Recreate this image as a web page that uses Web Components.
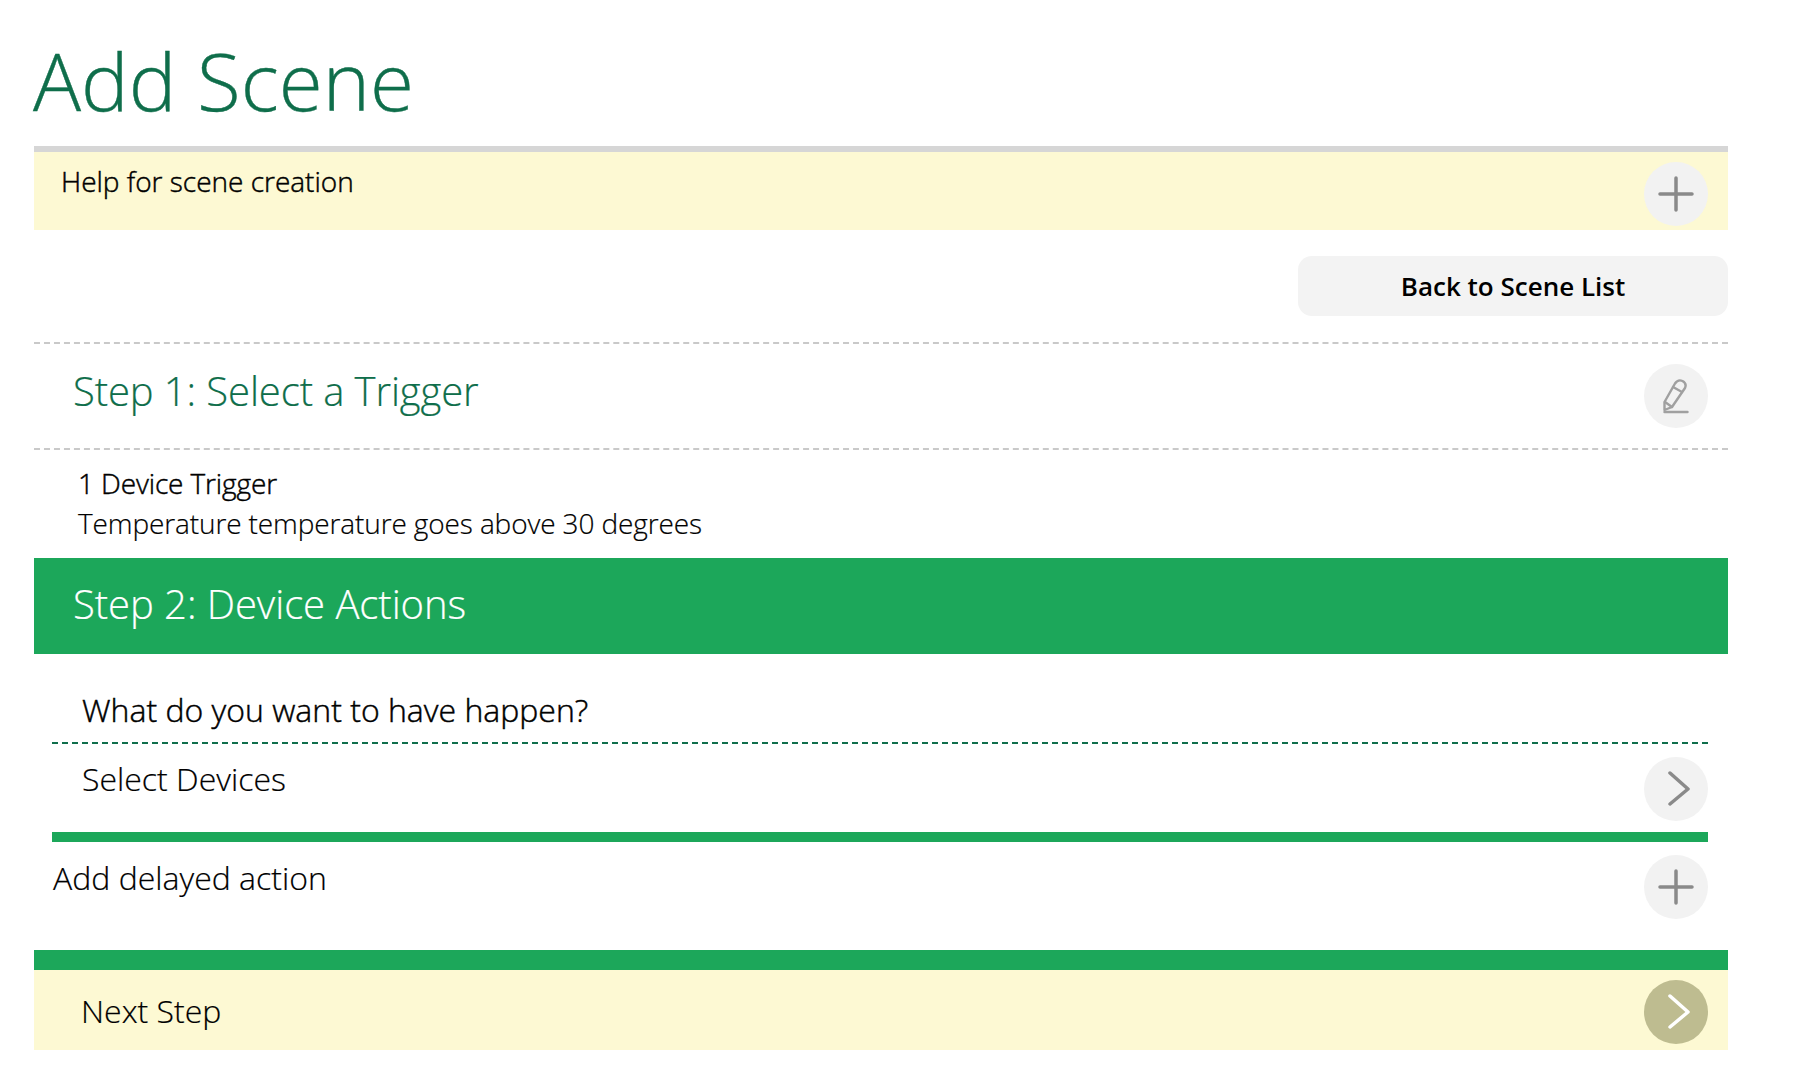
<!DOCTYPE html>
<html>
<head>
<meta charset="utf-8">
<title>Add Scene</title>
<style>
    html, body { margin: 0; background: #fff; }
    body { font-family: "Open Sans", sans-serif; font-weight: 300; color: #000; }
    scene-page { display: block; }
</style>
</head>
<body>
<template id="template-round-icon">
    <style>
        :host { display: block; flex: none; width: 64px; height: 64px; border-radius: 50%; background: var(--icon-bg, #f2f2f2); }
        svg { display: block; width: 64px; height: 64px; fill: none; stroke: var(--icon-fg, #8a8a8a); stroke-width: 3.5; stroke-linecap: round; stroke-linejoin: round; filter: blur(.5px); }
    </style>
    <svg viewBox="0 0 64 64"></svg>
</template>
<template id="template-scene-page">
    <style>
        :host { display: block; box-sizing: border-box; width: 1796px; padding: 0 68px 0 34px; }
        h1 { margin: 0 0 0 -1px; height: 146px; box-sizing: border-box; padding-top: 25px; font-size: 80px; line-height: 110px; font-weight: 300; color: #0f6e4b; -webkit-text-stroke: .4px #0f6e4b; }
        .back { display: flex; justify-content: flex-end; padding: 26px 0; }
        button { width: 430px; height: 60px; border: 0; border-radius: 14px; background: #f3f3f3; color: #000; font: 600 26px "Open Sans", sans-serif; padding: 0; }
    </style>
    <h1>Add Scene</h1>
    <help-bar>Help for scene creation</help-bar>
    <div class="back"><button>Back to Scene List</button></div>
    <step-title>Step 1: Select a Trigger</step-title>
    <trigger-summary heading="1 Device Trigger">Temperature temperature goes above 30 degrees</trigger-summary>
    <step-banner>Step 2: Device Actions</step-banner>
    <device-actions></device-actions>
    <next-step>Next Step</next-step>
</template>
<template id="template-help-bar">
    <style>
        :host { display: flex; justify-content: space-between; height: 84px; box-sizing: border-box; border-top: 6px solid #d6d6d6; background: #fdf9d3; font-size: 28px; padding: 10px 20px 0 27px; line-height: 38px; -webkit-text-stroke: .45px #000; }
    </style>
    <span><slot></slot></span>
    <round-icon name="plus"></round-icon>
</template>
<template id="template-step-title">
    <style>
        :host { display: flex; justify-content: space-between; height: 108px; box-sizing: border-box; border-top: 2px dashed #c9c9c9; border-bottom: 2px dashed #c9c9c9; padding: 20px 20px 0 39px; font-size: 40px; line-height: 50px; font-weight: 300; color: #0f6e4b; letter-spacing: -.1px; -webkit-text-stroke: .2px #0f6e4b; }
        span { padding-top: 2px; }
    </style>
    <span><slot></slot></span>
    <round-icon name="pencil"></round-icon>
</template>
<template id="template-trigger-summary">
    <style>
        :host { display: block; height: 108px; box-sizing: border-box; padding: 13px 0 0 44px; font-size: 28px; line-height: 40px; letter-spacing: -.12px; -webkit-text-stroke: .2px #000; }
        div { -webkit-text-stroke: .45px #000; }
    </style>
    <div></div>
    <slot></slot>
</template>
<template id="template-step-banner">
    <style>
        :host { display: block; height: 96px; box-sizing: border-box; background: #1ca75a; color: #fff; padding: 21px 0 0 39px; font-size: 40px; line-height: 50px; font-weight: 300; letter-spacing: -.05px; -webkit-text-stroke: .2px #fff; }
    </style>
    <slot></slot>
</template>
<template id="template-device-actions">
    <style>
        :host { display: block; box-sizing: border-box; height: 296px; padding: 0 20px 0 18px; font-size: 32px; -webkit-text-stroke: .2px #000; }
        .ask { height: 90px; box-sizing: border-box; padding: 34px 0 0 30px; line-height: 44px; border-bottom: 2px dashed #0f6e4b; -webkit-text-stroke: .45px #000; }
        .row { display: flex; justify-content: space-between; box-sizing: border-box; height: 98px; padding: 13px 0 0 30px; line-height: 44px; border-bottom: 10px solid #1ca75a; }
        .delay { display: flex; justify-content: space-between; padding: 13px 0 0 1px; line-height: 44px; }
        .delay span { padding-top: 1px; }
    </style>
    <div class="ask">What do you want to have happen?</div>
    <div class="row"><span>Select Devices</span><round-icon name="chevron"></round-icon></div>
    <div class="delay"><span>Add delayed action</span><round-icon name="plus"></round-icon></div>
</template>
<template id="template-next-step">
    <style>
        :host { display: flex; justify-content: space-between; height: 100px; box-sizing: border-box; border-top: 20px solid #1ca75a; background: #fdf9d3; padding: 10px 20px 0 47px; font-size: 32px; line-height: 44px; -webkit-text-stroke: .2px #000; }
        span { padding-top: 9px; }
        round-icon { --icon-bg: #bebc90; --icon-fg: #fff; }
    </style>
    <span><slot></slot></span>
    <round-icon name="chevron"></round-icon>
</template>
<scene-page></scene-page>
<script>
    (function () {
        const icons = {
            plus: '<path d="M32 16V48M16 32H48"/>',
            chevron: '<path d="M26 16L44 32L26 47"/>',
            pencil: '<g stroke="#a0a0a0" stroke-width="2.4"><path d="M20.500 46V38L31 19.500Q34 15 38.500 17Q43 19.500 41 24L28 43Z"/><path d="M29 23L38 28M21 38L28 43M20.500 48H43.500"/></g>'
        }

        function stamp(host, id) {
            const template = document.querySelector('#' + id).content
            const shadowRoot = host.attachShadow({ mode: 'open' })
            shadowRoot.appendChild(template.cloneNode(true))
            return shadowRoot
        }

        class RoundIcon extends HTMLElement {
            constructor() {
                super()
                stamp(this, 'template-round-icon')
            }
            connectedCallback() {
                this.shadowRoot.querySelector('svg').innerHTML = icons[this.getAttribute('name')]
            }
        }

        class TriggerSummary extends HTMLElement {
            constructor() {
                super()
                stamp(this, 'template-trigger-summary')
            }
            connectedCallback() {
                this.shadowRoot.querySelector('div').textContent = this.getAttribute('heading')
            }
        }

        customElements.define('round-icon', RoundIcon)
        customElements.define('trigger-summary', TriggerSummary)

        ;['help-bar', 'step-title', 'step-banner', 'device-actions', 'next-step', 'scene-page'].forEach(name => {
            customElements.define(name, class extends HTMLElement {
                constructor() {
                    super()
                    stamp(this, 'template-' + name)
                }
            })
        })
    })()
</script>
</body>
</html>
